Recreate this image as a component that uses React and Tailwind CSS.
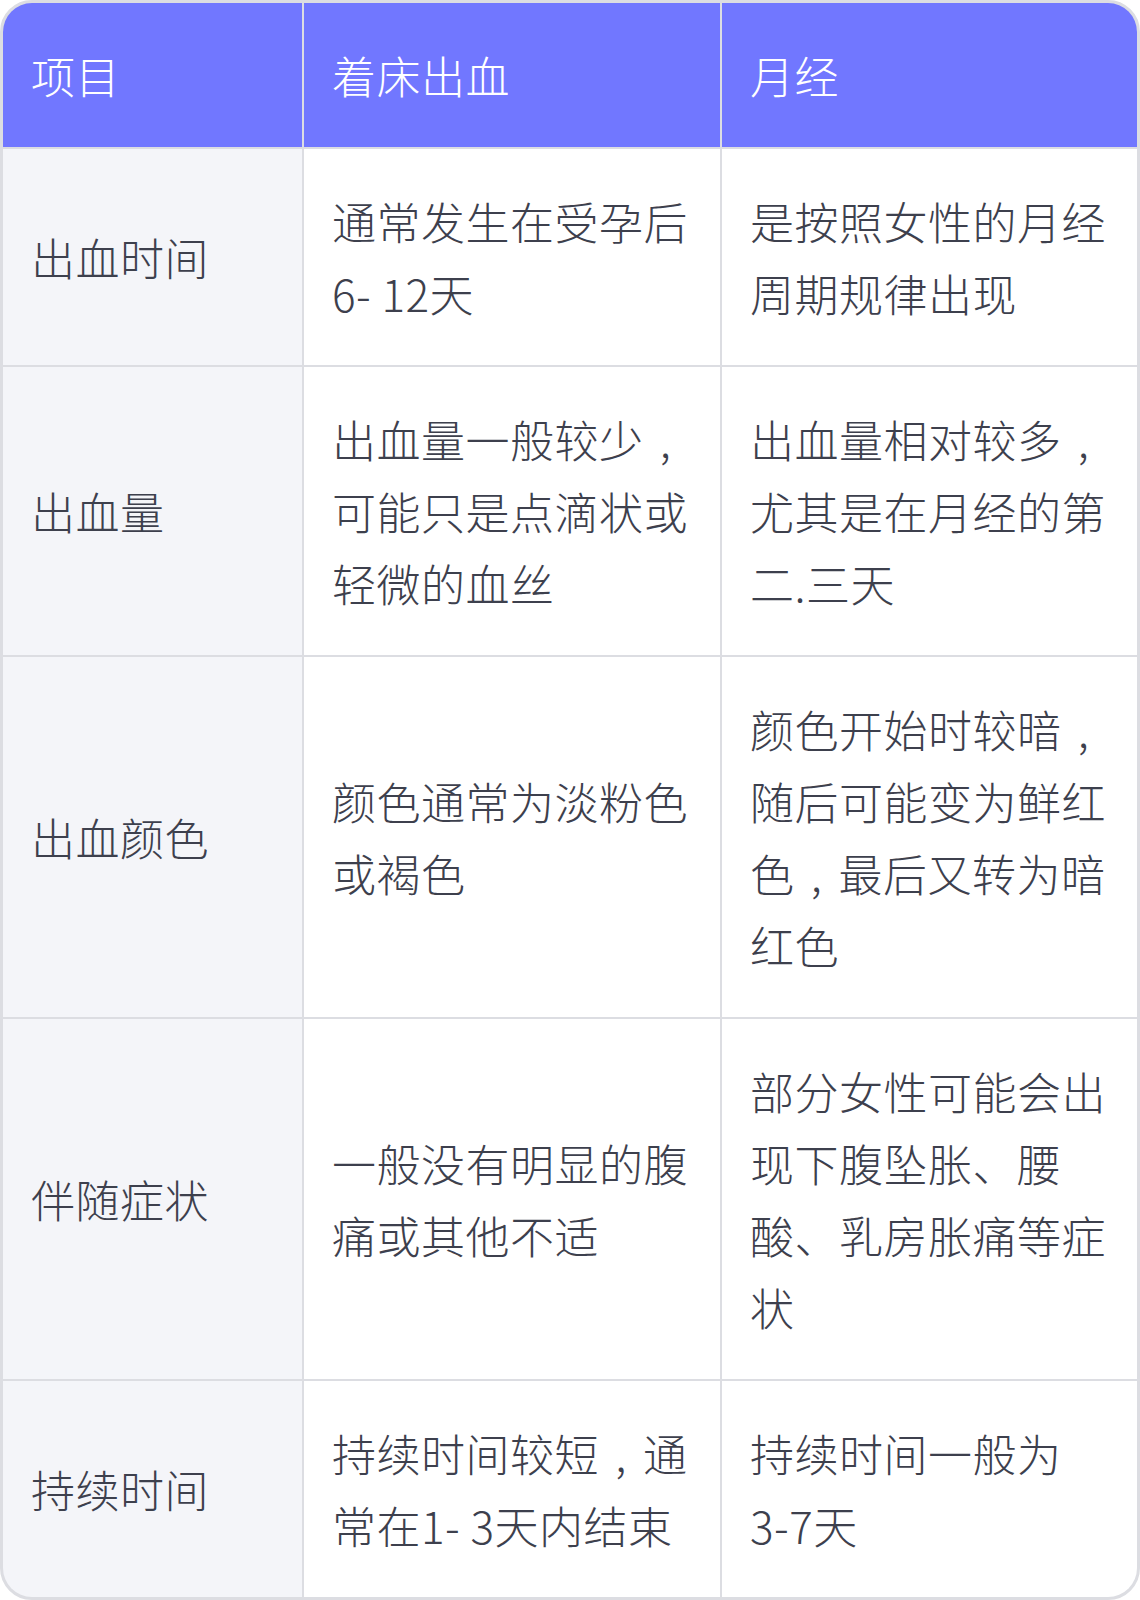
import React from "react";

const C = () => (
  <span className="inline-block w-[44px] text-center align-top">,</span>
);

const rows = [
  ["出血时间", <>通常发生在受孕后6- 12天</>, <>是按照女性的月经周期规律出现</>],
  ["出血量", <>出血量一般较少<C />可能只是点滴状或轻微的血丝</>, <>出血量相对较多<C />尤其是在月经的第二.三天</>],
  ["出血颜色", <>颜色通常为淡粉色或褐色</>, <>颜色开始时较暗<C />随后可能变为鲜红色<C />最后又转为暗红色</>],
  ["伴随症状", <>一般没有明显的腹痛或其他不适</>, <>部分女性可能会出现下腹坠胀、腰酸、乳房胀痛等症状</>],
  ["持续时间", <>持续时间较短<C />通常在1- 3天内结束</>, <>持续时间一般为<span className="whitespace-nowrap">3-7天</span></>],
];

const font = { fontFamily: '"Noto Sans CJK SC", "Noto Sans", sans-serif' };

const cell = "px-[28px] py-[36px] text-[44px] leading-[72px] tracking-[0.5px] font-light";

export default function App() {
  return (
    <div className="w-[1140px] h-[1600px] bg-white" style={font}>
      <div className="w-[1140px] border-[3px] border-[#dcdde2] rounded-[32px] overflow-hidden bg-[#dcdde2] flex flex-col gap-[2px]">
        <div className="flex gap-[2px] bg-[#dcdde2]">
          <div className={`w-[299px] shrink-0 bg-[#7177ff] text-white ${cell}`}>项目</div>
          <div className={`w-[416px] shrink-0 bg-[#7177ff] text-white ${cell}`}>着床出血</div>
          <div className={`flex-1 bg-[#7177ff] text-white ${cell}`}>月经</div>
        </div>
        {rows.map((r, i) => (
          <div key={i} className="flex gap-[2px]">
            <div className={`w-[299px] shrink-0 bg-[#f4f5f9] text-[#3d404d] flex items-center ${cell}`}>{r[0]}</div>
            <div className={`w-[416px] shrink-0 bg-white text-[#3d404d] flex items-center ${cell}`}>
              <span>{r[1]}</span>
            </div>
            <div className={`flex-1 bg-white text-[#3d404d] flex items-center ${cell}`}>
              <span>{r[2]}</span>
            </div>
          </div>
        ))}
      </div>
    </div>
  );
}
